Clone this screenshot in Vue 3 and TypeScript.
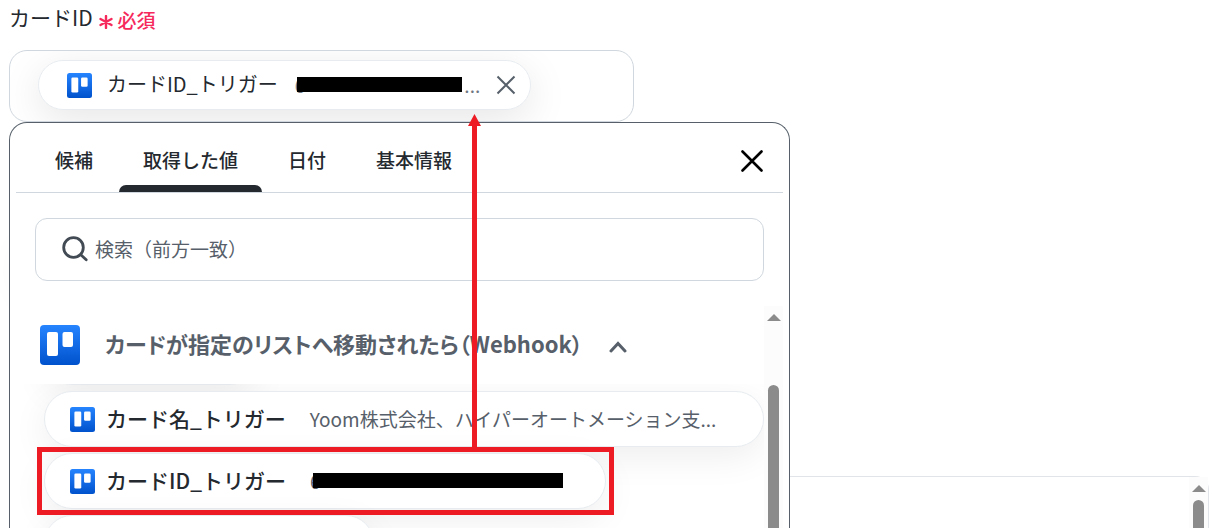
<script setup lang="ts">
import { h, ref } from 'vue'

const TrelloIcon = () =>
  h('svg', { viewBox: '0 0 40 40', 'aria-hidden': 'true' }, [
    h('defs', [
      h('linearGradient', { id: 'trello-blue', x1: '0', y1: '0', x2: '0', y2: '1' }, [
        h('stop', { offset: '0', 'stop-color': '#2684ff' }),
        h('stop', { offset: '1', 'stop-color': '#0052cc' }),
      ]),
    ]),
    h('rect', { width: 40, height: 40, rx: 4, fill: 'url(#trello-blue)' }),
    h('rect', { x: 7, y: 7, width: 11, height: 24, rx: 2, fill: '#fff' }),
    h('rect', { x: 22.5, y: 7, width: 10.5, height: 15, rx: 2, fill: '#fff' }),
  ])

const tabs = ['候補', '取得した値', '日付', '基本情報']
const activeTab = ref('取得した値')
const query = ref('')
const chips = [
  { name: 'カード名_トリガー', value: 'Yoom株式会社、ハイパーオートメーション支...' },
  { name: 'カードID_トリガー', value: '' },
]
</script>

<template>
  <main class="page">
    <div class="label">
      <span class="label-text">カードID</span>
      <svg class="asterisk" viewBox="0 0 14 14" aria-hidden="true">
        <path d="M7 1v12M1.5 4l11 6M12.5 4l-11 6" />
      </svg>
      <span class="required">必須</span>
    </div>

    <div class="anchor">
      <div class="field">
        <div class="selected">
          <TrelloIcon class="icon" />
          <span class="selected-name">カードID_トリガー</span>
          <span class="masked selected-value">6<i class="mask"></i>...</span>
          <button class="remove" type="button" aria-label="削除">
            <svg viewBox="0 0 20 20"><path d="M1.5 1.5l17 17M18.5 1.5l-17 17" /></svg>
          </button>
        </div>
      </div>

      <div class="behind"></div>
      <section class="panel">
        <header class="tabbar">
          <button
            v-for="tab in tabs"
            :key="tab"
            type="button"
            class="tab"
            :class="{ active: tab === activeTab }"
            @click="activeTab = tab"
          >{{ tab }}</button>
          <button class="close" type="button" aria-label="閉じる">
            <svg viewBox="0 0 22 22"><path d="M1.5 1.5l19 19M20.5 1.5l-19 19" /></svg>
          </button>
        </header>

        <label class="search">
          <svg viewBox="0 0 26 26" aria-hidden="true">
            <circle cx="11.5" cy="11.5" r="9.8" />
            <path d="M18.8 18.8l5.4 5" />
          </svg>
          <input v-model="query" type="text" placeholder="検索（前方一致）" aria-label="検索（前方一致）" />
        </label>

        <div class="results">
          <div class="content">
            <button class="group" type="button">
              <TrelloIcon class="group-icon" />
              <span class="group-title">カードが指定のリストへ移動されたら（Webhook）</span>
              <svg class="chevron" viewBox="0 0 18 12" aria-hidden="true"><path d="M2 10l7-7.5L16 10" /></svg>
            </button>
            <div class="list">
              <div class="chip previous"></div>
              <button v-for="chip in chips" :key="chip.name" type="button" class="chip" :class="{ wide: chip.value }">
                <TrelloIcon class="icon" />
                <span class="chip-name">{{ chip.name }}</span>
                <span v-if="chip.value" class="chip-value">{{ chip.value }}</span>
                <span v-else class="masked chip-value">6<i class="mask long"></i></span>
              </button>
              <div class="chip next"></div>
            </div>
          </div>
          <div class="scrollbar">
            <i class="up"></i>
            <i class="thumb low"></i>
          </div>
        </div>
      </section>

      <div class="highlight"></div>
      <svg class="arrow" viewBox="0 0 13 334" aria-hidden="true">
        <path d="M6.5 0L13 12H9v322H4V12H0z" />
      </svg>
    </div>

    <section class="lower">
      <div class="scrollbar">
        <i class="up"></i>
        <i class="thumb"></i>
      </div>
    </section>
  </main>
</template>

<style>
body {
  margin: 0;
  background: #fff;
}
</style>

<style scoped>
* {
  box-sizing: border-box;
}
.page {
  display: flex;
  flex-direction: column;
  height: 100vh;
  overflow: hidden;
  color: #24292f;
  font-family: "Noto Sans CJK JP", sans-serif;
}
button {
  padding: 0;
  border: 0;
  background: none;
  color: inherit;
  font: inherit;
  white-space: nowrap;
}
svg {
  display: block;
  flex: none;
}
.label {
  display: flex;
  align-items: center;
  height: 38px;
  margin: 0 0 12px 9px;
}
.label-text {
  padding-bottom: 4px;
  font-size: 21px;
  line-height: 32px;
}
.asterisk {
  width: 14px;
  height: 14px;
  margin: 6px 5px 0 6px;
}
.asterisk path {
  fill: none;
  stroke: #f6295c;
  stroke-width: 2.4;
  stroke-linecap: round;
}
.required {
  color: #f6295c;
  font-size: 19px;
  font-weight: 500;
}
.anchor {
  position: relative;
  flex: none;
  margin: 0 9px;
}
.field {
  max-width: 625px;
  padding: 9px 28px 11px;
  border: 1px solid #d0d7de;
  border-radius: 18px;
  overflow: hidden;
}
.selected {
  display: flex;
  align-items: center;
  width: fit-content;
  height: 50px;
  padding: 0 14px 0 28px;
  border: 1px solid #e8ecf0;
  border-radius: 25px;
  background: #fff;
  box-shadow: 0 10px 40px rgba(0, 0, 0, 0.1);
}
.icon {
  width: 25px;
  height: 25px;
}
.selected-name {
  margin: 0 17px 0 15px;
  padding-bottom: 4px;
  font-size: 20px;
}
.masked {
  display: flex;
  align-items: center;
  color: #6e7781;
  font-size: 19px;
}
.selected-value {
  padding-bottom: 2px;
}
.mask {
  width: 165px;
  height: 15px;
  margin: 0 2px 0 -8px;
  background: #000;
}
.mask.long {
  width: 250px;
  margin-right: 0;
}
.remove {
  margin-left: 16px;
}
.remove svg {
  width: 20px;
  height: 20px;
}
.remove path {
  fill: none;
  stroke: #57606a;
  stroke-width: 2;
}
.behind {
  position: absolute;
  top: 186px;
  left: 20px;
  width: 300px;
  height: 50px;
  border-radius: 25px;
  box-shadow: 0 10px 40px rgba(0, 0, 0, 0.14);
}
.panel {
  position: absolute;
  top: 72px;
  left: 0;
  display: flex;
  flex-direction: column;
  width: 100%;
  max-width: 781px;
  height: calc(100vh - 121px);
  padding: 0 6px;
  border: 1px solid #57606a;
  border-bottom: 0;
  border-radius: 18px 18px 0 0;
  background: #fff;
}
.tabbar {
  display: flex;
  flex: none;
  gap: 2px;
  height: 70px;
  padding: 0 20px 0 15px;
  border-bottom: 1px solid #d0d7de;
}
.tab {
  position: relative;
  padding: 4px 24px 0;
  font-size: 19px;
  font-weight: 500;
  line-height: 28px;
}
.tab.active::after {
  content: "";
  position: absolute;
  right: 0;
  bottom: 0;
  left: 0;
  height: 7px;
  border-radius: 7px 7px 0 0;
  background: #24292f;
}
.close {
  margin-left: auto;
}
.close svg {
  width: 22px;
  height: 22px;
  margin-top: 6px;
}
.close path {
  fill: none;
  stroke: #000;
  stroke-width: 2.6;
  stroke-linecap: round;
}
.search {
  display: flex;
  flex: none;
  align-items: center;
  gap: 7px;
  height: 63px;
  margin: 25px 19px;
  padding: 0 26px 2px;
  border: 1px solid #d0d7de;
  border-radius: 12px;
}
.search svg {
  width: 26px;
  height: 26px;
}
.search circle,
.search path {
  fill: none;
  stroke: #424a53;
  stroke-width: 2.8;
  stroke-linecap: round;
}
.search input {
  flex: 1;
  min-width: 0;
  padding: 0;
  border: 0;
  outline: 0;
  background: none;
  color: #24292f;
  font: 19px/28px "Noto Sans CJK JP", sans-serif;
}
.search input::placeholder {
  color: #57606a;
  opacity: 1;
}
.results {
  display: flex;
  flex: 1;
  min-height: 0;
}
.content {
  display: flex;
  flex: 1;
  flex-direction: column;
  min-width: 0;
}
.group {
  display: flex;
  flex: none;
  align-items: center;
  height: 78px;
  padding-left: 24px;
}
.group-icon {
  width: 40px;
  height: 40px;
}
.group-title {
  margin: 0 26px 0 25px;
  padding-bottom: 4px;
  color: #57606a;
  font-family: "Noto Sans CJK JP", sans-serif;
  font-size: 22px;
  font-weight: 600;
  font-feature-settings: "palt";
}
.chevron {
  width: 18px;
  height: 12px;
  margin-top: 4px;
}
.chevron path {
  fill: none;
  stroke: #57606a;
  stroke-width: 3;
  stroke-linecap: round;
}
.list {
  display: flex;
  flex: 1;
  flex-direction: column;
  align-items: flex-start;
  gap: 6px;
  min-height: 0;
  padding-left: 28px;
  overflow: hidden;
}
.chip {
  display: flex;
  flex: none;
  align-items: center;
  height: 56px;
  padding: 0 42px 0 25px;
  border: 1px solid #e8ecf0;
  border-radius: 28px;
  background: #fff;
  box-shadow: 0 10px 36px rgba(0, 0, 0, 0.07);
}
.chip.wide {
  width: 100%;
}
.chip.previous {
  width: 214px;
  margin-top: -55px;
}
.chip.next {
  width: 330px;
}
.chip-name {
  margin: 0 24px 0 11px;
  padding-bottom: 2px;
  font-size: 21px;
  font-weight: 500;
}
.chip-value {
  padding-bottom: 2px;
  color: #57606a;
  font-size: 19px;
}
.scrollbar {
  display: flex;
  flex: none;
  flex-direction: column;
  align-items: center;
  width: 19px;
  padding-top: 8px;
  background: #fcfcfc;
}
.up {
  border: 7px solid transparent;
  border-top: 0;
  border-bottom-color: #8b8b8b;
}
.thumb {
  flex: 1;
  width: 11px;
  margin-top: 8px;
  border-radius: 6px 6px 0 0;
  background: #8b8b8b;
}
.thumb.low {
  margin-top: 64px;
}
.highlight {
  position: absolute;
  top: 397px;
  left: 28px;
  width: 577px;
  height: 68px;
  border: 5px solid #ed1c24;
}
.arrow {
  position: absolute;
  top: 64px;
  left: 459px;
  width: 13px;
  height: 334px;
  fill: #ed1c24;
}
.lower {
  display: flex;
  flex: 1;
  justify-content: flex-end;
  min-height: 0;
  margin: 354px 3px 0 9px;
  border: 1px solid #e1e4e8;
  border-bottom: 0;
  border-left: 0;
  border-radius: 0 14px 0 0;
}
</style>
